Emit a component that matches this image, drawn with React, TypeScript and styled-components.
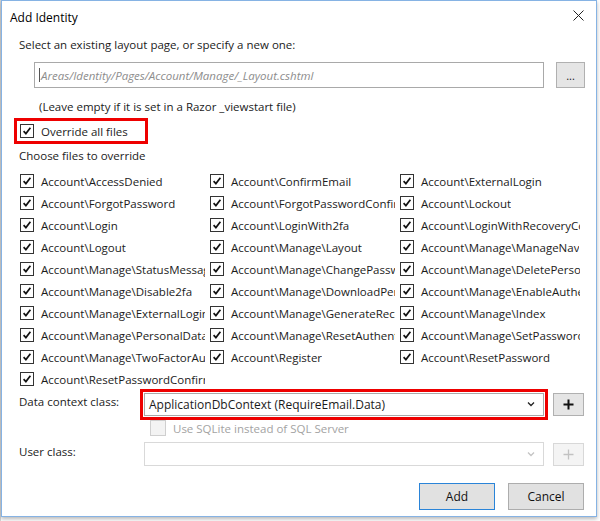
import React from "react";
import styled, { createGlobalStyle } from "styled-components";

const GlobalStyle = createGlobalStyle`
  html, body { margin: 0; padding: 0; background: #f3f3f3; }
  body { font-family: "Open Sans", "Noto Sans", sans-serif; font-size: 11.5px; color: #1b1b1b; }
  * { box-sizing: border-box; }
`;

const Page = styled.div`
  width: 600px;
  height: 521px;
  padding-left: 1px;
  background: #ffffff;
  border-left: 1px solid #d4d4d4;
`;

const Dialog = styled.div`
  width: 596px;
  height: 517px;
  margin-left: -1px;
  background: #ffffff;
  border: 1px solid #86b3e4;
  box-shadow: 0 2px 4px rgba(0, 0, 0, 0.28);
  display: flex;
  flex-direction: column;
`;

const TitleBar = styled.div`
  height: 33px;
  display: flex;
  align-items: center;
  justify-content: space-between;
  padding: 0 12px 1px 8px;
  font-size: 12px;
  color: #000;
`;

const CloseBtn = styled.div`
  width: 12px;
  height: 12px;
  display: flex;
  align-items: center;
  justify-content: center;
  margin-top: -3px;
`;

const Body = styled.div`
  padding: 0 11px 0 17px;
  display: flex;
  flex-direction: column;
`;

const TextRow = styled.div<{ $mt?: number; $indent?: number; $h?: number }>`
  height: ${(p) => p.$h ?? 18}px;
  margin-top: ${(p) => p.$mt ?? 0}px;
  padding-left: ${(p) => p.$indent ?? 0}px;
  display: flex;
  align-items: center;
  white-space: nowrap;
`;

const PathRow = styled.div`
  margin-top: 8px;
  height: 26px;
  padding-left: 15px;
  display: flex;
  gap: 12px;
`;

const PathInput = styled.div`
  width: 510px;
  height: 26px;
  border: 1px solid #a9a9a9;
  display: flex;
  align-items: center;
  padding-left: 4px;
  font-style: italic;
  color: #8d8d8d;
  white-space: nowrap;
`;

const Caret = styled.span`
  display: inline-block;
  width: 1px;
  height: 14px;
  background: #555;
  margin-right: 1px;
`;

const SmallButton = styled.div<{ $disabled?: boolean }>`
  width: 29px;
  height: 26px;
  background: ${(p) => (p.$disabled ? "#f4f4f4" : "#e5e5e5")};
  border: 1px solid ${(p) => (p.$disabled ? "#d8d8d8" : "#b0b0b0")};
  display: flex;
  align-items: center;
  justify-content: center;
  color: ${(p) => (p.$disabled ? "#bdbdbd" : "#222")};
  font-size: 11px;
`;

const PlusButton = styled(SmallButton)`
  width: 31px;
  height: 23px;
`;

const Highlight = styled.div<{ $offset?: number }>`
  outline: 3px solid #ee0000;
  outline-offset: ${(p) => p.$offset ?? 0}px;
`;

const OverrideWrap = styled(Highlight)`
  margin-top: 6px;
  margin-left: -2px;
  width: 128px;
  height: 20px;
  padding-left: 3px;
  display: flex;
  align-items: center;
  align-self: flex-start;
`;

const Check = styled.label<{ $disabled?: boolean }>`
  display: flex;
  align-items: center;
  gap: 7px;
  white-space: nowrap;
  overflow: hidden;
  text-overflow: clip;
  color: ${(p) => (p.$disabled ? "#a3a3a3" : "inherit")};
`;

const Box = styled.span<{ $disabled?: boolean }>`
  flex: none;
  width: ${(p) => (p.$disabled ? 16 : 14)}px;
  height: ${(p) => (p.$disabled ? 16 : 14)}px;
  border: 1px solid ${(p) => (p.$disabled ? "#cfcfcf" : "#333333")};
  background: ${(p) => (p.$disabled ? "#f3f3f3" : "#ffffff")};
  display: flex;
  align-items: center;
  justify-content: center;
`;

const Grid = styled.div`
  margin-top: 6px;
  display: grid;
  grid-template-columns: 190px 190px 185px;
  grid-auto-rows: 22px;
  padding-left: 1px;
`;

const Cell = styled.div`
  display: flex;
  align-items: center;
  padding-right: 5px;
  overflow: hidden;
`;

const FieldRow = styled.div<{ $mt: number }>`
  margin-top: ${(p) => p.$mt}px;
  display: flex;
  align-items: center;
  height: 24px;
`;

const FieldLabel = styled.div`
  width: 125px;
  align-self: flex-start;
  padding-top: 2px;
`;

const SelectWrap = styled.div`
  width: 400px;
  margin-right: 9px;
`;

const SelectBox = styled.div<{ $disabled?: boolean }>`
  height: ${(p) => (p.$disabled ? 24 : 23)}px;
  border: 1px solid ${(p) => (p.$disabled ? "#d9d9d9" : "#a9a9a9")};
  background: #ffffff;
  display: flex;
  align-items: center;
  justify-content: space-between;
  padding: 0 8px 0 4px;
  font-size: 12px;
  white-space: nowrap;
`;

const SqlRow = styled.div`
  margin-top: 4px;
  height: 16px;
  padding-left: 131px;
  display: flex;
  align-items: center;
`;

const Footer = styled.div`
  margin-top: 17px;
  display: flex;
  justify-content: flex-end;
  gap: 13px;
  padding-right: 1px;
`;

const DialogButton = styled.div<{ $primary?: boolean }>`
  width: 76px;
  height: 27px;
  background: #e1e1e1;
  border: 1px solid ${(p) => (p.$primary ? "#2a84d8" : "#adadad")};
  display: flex;
  align-items: center;
  justify-content: center;
  font-size: 12px;
  color: #111;
`;

const Tick = () => (
  <svg width="10" height="10" viewBox="0 0 10 10">
    <path d="M1.6 5.2 L3.9 7.6 L8.4 1.8" fill="none" stroke="#111" strokeWidth="1.7" />
  </svg>
);

const Chevron = ({ color }: { color: string }) => (
  <svg width="8" height="6" viewBox="0 0 8 6">
    <path d="M1 1.5 L4 4.5 L7 1.5" fill="none" stroke={color} strokeWidth="1.3" />
  </svg>
);

const Plus = ({ color, w }: { color: string; w: number }) => (
  <svg width="11" height="11" viewBox="0 0 11 11">
    <path d="M5.5 0.5 V10.5 M0.5 5.5 H10.5" stroke={color} strokeWidth={w} />
  </svg>
);

const files = [
  "Account\\AccessDenied",
  "Account\\ConfirmEmail",
  "Account\\ExternalLogin",
  "Account\\ForgotPassword",
  "Account\\ForgotPasswordConfirmation",
  "Account\\Lockout",
  "Account\\Login",
  "Account\\LoginWith2fa",
  "Account\\LoginWithRecoveryCode",
  "Account\\Logout",
  "Account\\Manage\\Layout",
  "Account\\Manage\\ManageNav",
  "Account\\Manage\\StatusMessage",
  "Account\\Manage\\ChangePassword",
  "Account\\Manage\\DeletePersonalData",
  "Account\\Manage\\Disable2fa",
  "Account\\Manage\\DownloadPersonalData",
  "Account\\Manage\\EnableAuthenticator",
  "Account\\Manage\\ExternalLogins",
  "Account\\Manage\\GenerateRecoveryCodes",
  "Account\\Manage\\Index",
  "Account\\Manage\\PersonalData",
  "Account\\Manage\\ResetAuthenticator",
  "Account\\Manage\\SetPassword",
  "Account\\Manage\\TwoFactorAuthentication",
  "Account\\Register",
  "Account\\ResetPassword",
  "Account\\ResetPasswordConfirmation",
];

export default function App() {
  return (
    <>
      <GlobalStyle />
      <Page>
        <Dialog>
          <TitleBar>
            <span>Add Identity</span>
            <CloseBtn>
              <svg width="11" height="11" viewBox="0 0 11 11">
                <path d="M0.5 0.5 L10.5 10.5 M10.5 0.5 L0.5 10.5" stroke="#222" strokeWidth="1" />
              </svg>
            </CloseBtn>
          </TitleBar>
          <Body>
            <TextRow $h={20}>Select an existing layout page, or specify a new one:</TextRow>
            <PathRow>
              <PathInput>
                <Caret />
                Areas/Identity/Pages/Account/Manage/_Layout.cshtml
              </PathInput>
              <SmallButton>...</SmallButton>
            </PathRow>
            <TextRow $mt={9} $indent={20}>
              (Leave empty if it is set in a Razor _viewstart file)
            </TextRow>
            <OverrideWrap>
              <Check>
                <Box>
                  <Tick />
                </Box>
                Override all files
              </Check>
            </OverrideWrap>
            <TextRow $mt={5}>Choose files to override</TextRow>
            <Grid>
              {files.map((f) => (
                <Cell key={f}>
                  <Check>
                    <Box>
                      <Tick />
                    </Box>
                    {f}
                  </Check>
                </Cell>
              ))}
            </Grid>
            <FieldRow $mt={2}>
              <FieldLabel>Data context class:</FieldLabel>
              <SelectWrap>
                <Highlight $offset={1}>
                  <SelectBox>
                    ApplicationDbContext (RequireEmail.Data)
                    <Chevron color="#222" />
                  </SelectBox>
                </Highlight>
              </SelectWrap>
              <PlusButton>
                <Plus color="#111" w={2} />
              </PlusButton>
            </FieldRow>
            <SqlRow>
              <Check $disabled>
                <Box $disabled />
                Use SQLite instead of SQL Server
              </Check>
            </SqlRow>
            <FieldRow $mt={6}>
              <FieldLabel>User class:</FieldLabel>
              <SelectWrap>
                <SelectBox $disabled>
                  <span />
                  <Chevron color="#c4c4c4" />
                </SelectBox>
              </SelectWrap>
              <PlusButton $disabled>
                <Plus color="#c2c2c2" w={1.3} />
              </PlusButton>
            </FieldRow>
            <Footer>
              <DialogButton $primary>Add</DialogButton>
              <DialogButton>Cancel</DialogButton>
            </Footer>
          </Body>
        </Dialog>
      </Page>
    </>
  );
}
